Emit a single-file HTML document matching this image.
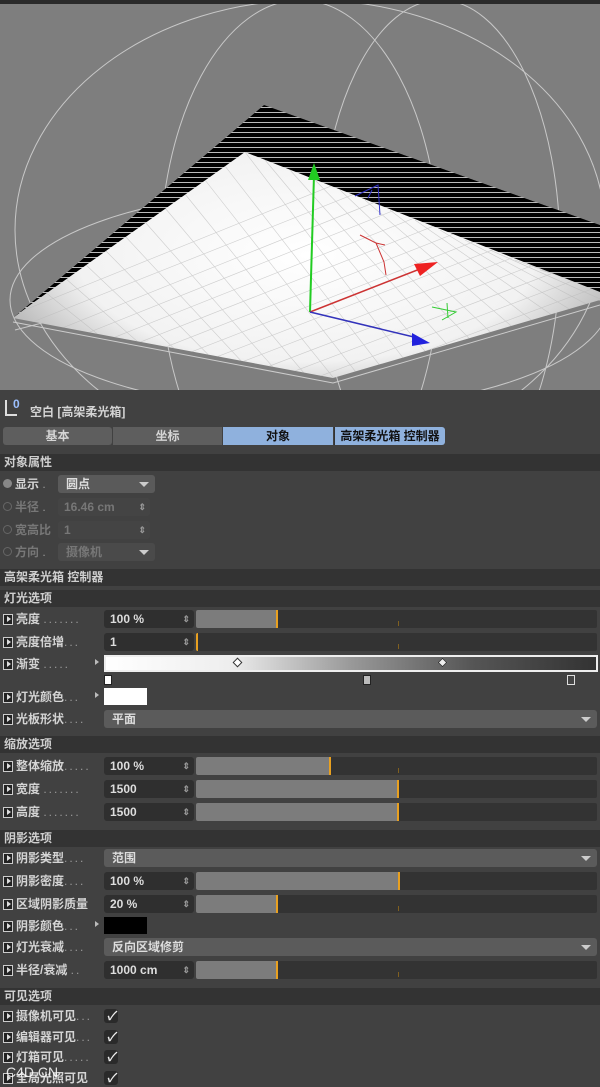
<!DOCTYPE html>
<html><head><meta charset="utf-8"><style>
*{margin:0;padding:0;box-sizing:border-box}
body{width:600px;height:1085px;overflow:hidden;background:#414141;font-family:"Liberation Sans","Noto Sans CJK SC",sans-serif;font-weight:bold;color:#d4d4d4;font-size:12px;position:relative}
svg{display:block}
.a{position:absolute}
.hd{position:absolute;left:0;width:600px;height:17px;background:#333;padding-left:4px;line-height:17px;color:#cfcfcf}
.r{position:absolute;left:3px;height:18px;line-height:18px;white-space:nowrap}
.ic{display:inline-block;width:10px;height:11px;border:1.5px solid #ccc;background:#222;vertical-align:-2px;margin-right:3px;position:relative}
.ic:after{content:"";position:absolute;left:3px;top:1px;border-left:4px solid #ddd;border-top:3px solid transparent;border-bottom:3px solid transparent}
.dt{color:#999;font-weight:normal;letter-spacing:2px}
.f{position:absolute;left:104px;width:90px;height:18px;background:#2f2f2f;border-radius:3px;line-height:18px;padding-left:6px;color:#ddd}
.f b{position:absolute;right:4px;top:0;font-size:9px;color:#999}
.s{position:absolute;left:196px;width:401px;height:18px;background:#333;border-radius:2px;overflow:hidden}
.s div{height:18px;background:#7c7c7c;border-right:2px solid #e8a020}
.s i{position:absolute;left:202px;top:11px;width:1px;height:5px;background:#806020}
.dd{position:absolute;left:104px;width:493px;height:18px;background:#5b5b5b;border-radius:3px;line-height:18px;padding-left:8px;color:#ddd}
.dd:after{content:"";position:absolute;right:6px;top:7px;border-top:5px solid #ccc;border-left:5px solid transparent;border-right:5px solid transparent}
.ck{position:absolute;left:104px;width:14px;height:14px;background:#2a2a2a;border-radius:3px;color:#eee;font-size:12px;line-height:14px;text-align:center;font-style:italic}
</style></head><body>
<svg class="a" style="left:0;top:0" width="600" height="390" viewBox="0 0 600 390">
<defs><radialGradient id="g" cx="0.5" cy="0.55" r="0.6"><stop offset="0" stop-color="#fff"/><stop offset="0.65" stop-color="#f2f2f2"/><stop offset="1" stop-color="#a8a8a8"/></radialGradient>
<pattern id="st" width="6" height="5" patternUnits="userSpaceOnUse"><rect width="6" height="5" fill="#000"/><rect y="2" width="6" height="1" fill="#bbb"/></pattern>
<clipPath id="cp"><polygon points="245,152 600,292 600,300 333,378 13,318 30,305"/></clipPath></defs>
<rect width="600" height="390" fill="#7e7e7e"/>
<g fill="none" stroke="#c8c8c8" stroke-width="1">
<ellipse cx="310" cy="230" rx="295" ry="230"/>
<ellipse cx="310" cy="300" rx="300" ry="110"/>
<ellipse cx="300" cy="260" rx="140" ry="260"/>
<ellipse cx="440" cy="250" rx="120" ry="250"/>
<path d="M15 330 Q310 250 600 300"/>
</g>
<polygon points="264,105 600,225 600,300 333,378 13,318" fill="url(#g)"/>
<path d="M13 322 L333 383 L600 305" stroke="#ccc" fill="none"/>
<polygon points="264,105 600,225 600,292 245,152 30,305 13,318" fill="url(#st)"/>
<g stroke="#bbb" stroke-width="0.6" opacity="0.7" clip-path="url(#cp)">
<path d="M0 320 L420 150 M0 335 L440 160 M20 345 L460 168 M45 350 L480 176 M70 355 L500 184 M95 360 L520 192 M120 365 L540 200 M145 370 L560 208 M170 375 L580 216 M195 380 L600 224 M220 385 L620 232 M245 390 L640 240 M270 395 L660 248 M295 400 L680 256 M320 405 L700 264 M345 410 L720 272"/>
<path d="M245 152 L420 380 M225 166 L395 385 M205 180 L370 390 M185 194 L345 392 M165 208 L320 392 M145 222 L295 392 M125 236 L270 392 M105 250 L245 392 M85 264 L220 392 M65 278 L195 392 M45 292 L170 392 M265 160 L445 375 M290 170 L470 370 M315 180 L495 365 M340 190 L520 360 M365 200 L545 355 M390 210 L570 350 M415 220 L595 345 M440 230 L620 340 M465 240 L645 335 M490 250 L670 330 M515 260 L695 325 M540 270 L720 320"/>
</g>
<line x1="310" y1="312" x2="314" y2="175" stroke="#2c2" stroke-width="2"/>
<polygon points="308,180 320,180 314,163" fill="#2c2"/>
<line x1="310" y1="312" x2="425" y2="267" stroke="#c33" stroke-width="1.5"/>
<polygon points="414,264 438,262 420,276" fill="#e22"/>
<line x1="310" y1="312" x2="418" y2="338" stroke="#33b" stroke-width="1.5"/>
<polygon points="412,333 430,343 412,346" fill="#22d"/>
<path d="M360 235 L376 243 L384 262 L386 275 M376 243 L385 245" stroke="#c33" fill="none"/>
<path d="M432 307 L456 312 L442 320 M447 303 L448 318" stroke="#3c3" fill="none"/>
<path d="M355 196 L378 185 L380 215 M372 190 L368 198" stroke="#33c" fill="none"/>
</svg>
<div class="a" style="left:0;top:388;width:600px;height:4px;background:#2a2a2a"></div>
<div class="a" style="left:5px;top:400px;width:12px;height:16px;border-left:2px solid #ddd;border-bottom:2px solid #ddd"></div>
<div class="a" style="left:13px;top:397px;color:#9cc0ff;font-size:12px">0</div>
<div class="a" style="left:30px;top:403px">空白 [高架柔光箱]</div>
<div class="a" style="left:3px;top:427px;width:109px;height:18px;background:#5e5e5e;border-radius:3px;text-align:center;line-height:18px">基本</div>
<div class="a" style="left:113px;top:427px;width:109px;height:18px;background:#5e5e5e;text-align:center;line-height:18px">坐标</div>
<div class="a" style="left:223px;top:427px;width:110px;height:18px;background:#8fb1dd;color:#111;text-align:center;line-height:18px">对象</div>
<div class="a" style="left:334px;top:427px;width:111px;height:18px;background:#8fb1dd;color:#111;text-align:center;line-height:18px;border-radius:0 3px 3px 0;border-left:1px solid #333">高架柔光箱 控制器</div>
<div class="hd" style="top:454px">对象属性</div>
<div class="r" style="top:475px"><span style="display:inline-block;width:9px;height:9px;border-radius:50%;background:#888;margin-right:3px"></span>显示 <span class="dt">.</span></div>
<div class="dd" style="left:58px;width:97px;top:475px;background:#5a5a5a">圆点</div>
<div class="r" style="top:498px;color:#777"><span style="display:inline-block;width:9px;height:9px;border-radius:50%;border:1px solid #666;margin-right:3px"></span>半径 <span class="dt">.</span></div>
<div class="f" style="left:58px;width:92px;top:498px;background:#444;color:#777">16.46 cm<b>⇕</b></div>
<div class="r" style="top:521px;color:#777"><span style="display:inline-block;width:9px;height:9px;border-radius:50%;border:1px solid #666;margin-right:3px"></span>宽高比</div>
<div class="f" style="left:58px;width:92px;top:521px;background:#444;color:#777">1<b>⇕</b></div>
<div class="r" style="top:543px;color:#777"><span style="display:inline-block;width:9px;height:9px;border-radius:50%;border:1px solid #666;margin-right:3px"></span>方向 <span class="dt">.</span></div>
<div class="dd" style="left:58px;width:97px;top:543px;background:#4a4a4a;color:#777">摄像机</div>
<div class="hd" style="top:569px">高架柔光箱 控制器</div>
<div class="hd" style="top:590px">灯光选项</div>
<div class="r" style="top:610px"><i class="ic"></i>亮度 <span class="dt">.......</span></div>
<div class="f" style="top:610px">100 %<b>⇕</b></div><div class="s" style="top:610px"><div style="width:82px"></div><i></i></div>
<div class="r" style="top:633px"><i class="ic"></i>亮度倍增<span class="dt">...</span></div>
<div class="f" style="top:633px">1<b>⇕</b></div><div class="s" style="top:633px"><div style="width:2px"></div><i></i></div>
<div class="r" style="top:655px"><i class="ic"></i>渐变 <span class="dt">.....</span></div>
<div class="a" style="left:95px;top:659px;border-left:4px solid #bbb;border-top:3px solid transparent;border-bottom:3px solid transparent"></div>
<div class="a" style="left:104px;top:655px;width:494px;height:17px;border:2px solid #eee;background:linear-gradient(90deg,#fff 0%,#eee 25%,#999 50%,#555 75%,#333 100%)"></div>
<div class="a" style="left:234px;top:659px;width:7px;height:7px;background:#fff;border:1px solid #333;transform:rotate(45deg)"></div>
<div class="a" style="left:439px;top:659px;width:7px;height:7px;background:#eee;border:1px solid #333;transform:rotate(45deg)"></div>
<div class="a" style="left:104px;top:675px;width:8px;height:10px;background:#fff;border:1px solid #222"></div>
<div class="a" style="left:363px;top:675px;width:8px;height:10px;background:#bbb;border:1px solid #222"></div>
<div class="a" style="left:567px;top:675px;width:8px;height:10px;background:#444;border:1px solid #ddd"></div>
<div class="r" style="top:688px"><i class="ic"></i>灯光颜色<span class="dt">...</span></div>
<div class="a" style="left:95px;top:692px;border-left:4px solid #bbb;border-top:3px solid transparent;border-bottom:3px solid transparent"></div>
<div class="a" style="left:104px;top:688px;width:43px;height:17px;background:#fff"></div>
<div class="r" style="top:710px"><i class="ic"></i>光板形状<span class="dt">....</span></div>
<div class="dd" style="top:710px">平面</div>
<div class="hd" style="top:736px">缩放选项</div>
<div class="r" style="top:757px"><i class="ic"></i>整体缩放<span class="dt">.....</span></div>
<div class="f" style="top:757px">100 %<b>⇕</b></div><div class="s" style="top:757px"><div style="width:135px"></div><i></i></div>
<div class="r" style="top:780px"><i class="ic"></i>宽度 <span class="dt">.......</span></div>
<div class="f" style="top:780px">1500<b>⇕</b></div><div class="s" style="top:780px"><div style="width:203px"></div></div>
<div class="r" style="top:803px"><i class="ic"></i>高度 <span class="dt">.......</span></div>
<div class="f" style="top:803px">1500<b>⇕</b></div><div class="s" style="top:803px"><div style="width:203px"></div></div>
<div class="hd" style="top:830px">阴影选项</div>
<div class="r" style="top:849px"><i class="ic"></i>阴影类型<span class="dt">....</span></div>
<div class="dd" style="top:849px">范围</div>
<div class="r" style="top:872px"><i class="ic"></i>阴影密度<span class="dt">....</span></div>
<div class="f" style="top:872px">100 %<b>⇕</b></div><div class="s" style="top:872px"><div style="width:204px"></div></div>
<div class="r" style="top:895px"><i class="ic"></i>区域阴影质量</div>
<div class="f" style="top:895px">20 %<b>⇕</b></div><div class="s" style="top:895px"><div style="width:82px"></div><i></i></div>
<div class="r" style="top:917px"><i class="ic"></i>阴影颜色<span class="dt">...</span></div>
<div class="a" style="left:95px;top:921px;border-left:4px solid #bbb;border-top:3px solid transparent;border-bottom:3px solid transparent"></div>
<div class="a" style="left:104px;top:917px;width:43px;height:17px;background:#000"></div>
<div class="r" style="top:938px"><i class="ic"></i>灯光衰减<span class="dt">....</span></div>
<div class="dd" style="top:938px">反向区域修剪</div>
<div class="r" style="top:961px"><i class="ic"></i>半径/衰减 <span class="dt">..</span></div>
<div class="f" style="top:961px">1000 cm<b>⇕</b></div><div class="s" style="top:961px"><div style="width:82px"></div><i></i></div>
<div class="hd" style="top:988px">可见选项</div>
<div class="r" style="top:1007px"><i class="ic"></i>摄像机可见<span class="dt">...</span></div><div class="ck" style="top:1009px">✓</div>
<div class="r" style="top:1028px"><i class="ic"></i>编辑器可见<span class="dt">...</span></div><div class="ck" style="top:1030px">✓</div>
<div class="r" style="top:1048px"><i class="ic"></i>灯箱可见<span class="dt">.....</span></div><div class="ck" style="top:1050px">✓</div>
<div class="r" style="top:1069px"><i class="ic"></i>全局光照可见</div><div class="ck" style="top:1071px">✓</div>
<div class="a" style="left:6px;top:1064px;color:#fff;font-weight:normal;font-size:14px;opacity:.85">C4D.CN</div>
</body></html>
